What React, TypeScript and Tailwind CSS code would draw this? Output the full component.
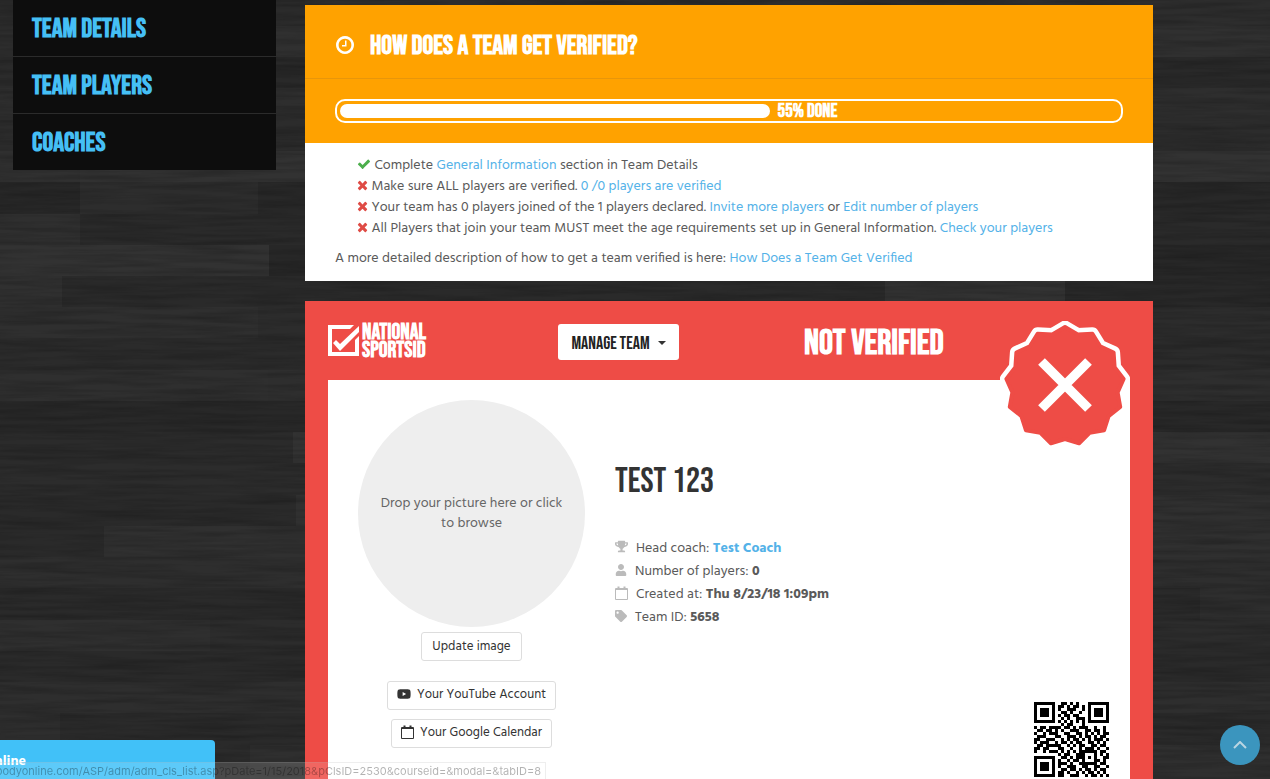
import React from "react";
import { FaTag, FaTrophy, FaUser, FaYoutube } from "react-icons/fa";

type IconProps = { className?: string };

const CheckIcon = ({ className }: IconProps) => (
  <svg viewBox="0 0 1792 1792" fill="currentColor" className={className}>
    <path d="M1671 566q0 40-28 68l-724 724-136 136q-28 28-68 28t-68-28l-136-136-362-362q-28-28-28-68t28-68l136-136q28-28 68-28t68 28l294 295 656-657q28-28 68-28t68 28l136 136q28 28 28 68z" />
  </svg>
);

const TimesIcon = ({ className }: IconProps) => (
  <svg viewBox="190 0 1408 1792" fill="currentColor" className={className}>
    <path d="M1490 1322q0 40-28 68l-136 136q-28 28-68 28t-68-28l-294-294-294 294q-28 28-68 28t-68-28l-136-136q-28-28-28-68t28-68l294-294-294-294q-28-28-28-68t28-68l136-136q28-28 68-28t68 28l294 294 294-294q28-28 68-28t68 28l136 136q28 28 28 68t-28 68l-294 294 294 294q28 28 28 68z" />
  </svg>
);

const ClockIcon = ({ className }: IconProps) => (
  <svg viewBox="128 128 1536 1536" fill="currentColor" className={className}>
    <path d="M1024 544v448q0 14-9 23t-23 9h-320q-14 0-23-9t-9-23v-64q0-14 9-23t23-9h224v-352q0-14 9-23t23-9h64q14 0 23 9t9 23zm416 352q0-148-73-273t-198-198-273-73-273 73-198 198-73 273 73 273 198 198 273 73 273-73 198-198 73-273zm224 0q0 209-103 385.5t-279.5 279.5-385.5 103-385.5-103-279.5-279.5-103-385.5 103-385.5 279.5-279.5 385.5-103 385.5 103 279.5 279.5 103 385.5z" />
  </svg>
);

const CalendarIcon = ({ className }: IconProps) => (
  <svg viewBox="0 0 13 14" fill="none" stroke="currentColor" className={className}>
    <path d="M.5 2.5h12v11H.5z" />
    <path d="M.5 3.5h12" />
    <path d="M3.5 .5v3M9.5 .5v3" strokeWidth="2" />
  </svg>
);

// [x, y, width, colour] of every board on the floor
const planks: [number, number, number, string][] = [
  [0, 0, 305, "#2b2b2b"], [305, 0, 965, "#2d2d2d"],
  [0, 26, 276, "#2d2d2d"], [276, 26, 994, "#303030"],
  [0, 57, 276, "#2b2b2b"], [276, 57, 994, "#292929"],
  [0, 88, 1270, "#2e2e2e"],
  [0, 120, 1270, "#2c2c2c"],
  [0, 151, 80, "#303030"], [80, 151, 1190, "#323232"],
  [0, 182, 80, "#272727"], [80, 182, 178, "#2d2d2d"], [258, 182, 1012, "#282828"],
  [0, 214, 80, "#2f2f2f"], [80, 214, 1190, "#2a2a2a"],
  [0, 245, 269, "#323232"], [269, 245, 1001, "#272727"],
  [0, 276, 62, "#303030"], [62, 276, 823, "#2a2a2a"], [885, 276, 180, "#323232"], [1065, 276, 205, "#282828"],
  [0, 307, 258, "#2f2f2f"], [258, 307, 1012, "#2c2c2c"],
  [0, 338, 1270, "#2b2b2b"],
  [0, 370, 268, "#2f2f2f"], [268, 370, 1002, "#2e2e2e"],
  [0, 401, 1270, "#282828"],
  [0, 432, 293, "#2b2b2b"], [293, 432, 977, "#323232"],
  [0, 463, 1270, "#2c2c2c"],
  [0, 495, 296, "#2a2a2a"], [296, 495, 974, "#303030"],
  [0, 526, 104, "#2a2a2a"], [104, 526, 1166, "#303030"],
  [0, 557, 1270, "#2e2e2e"],
  [0, 588, 1200, "#2a2a2a"], [1200, 588, 70, "#2e2e2e"],
  [0, 620, 210, "#2f2f2f"], [210, 620, 1060, "#2c2c2c"],
  [0, 651, 1270, "#2a2a2a"],
  [0, 682, 1270, "#2e2e2e"],
  [0, 713, 60, "#2e2e2e"], [60, 713, 1210, "#2a2a2a"],
  [0, 745, 250, "#2b2b2b"], [250, 745, 1020, "#2f2f2f"],
];

const WoodFloor = () => (
  <svg
    viewBox="0 0 1270 779"
    preserveAspectRatio="xMidYMin slice"
    className="fixed inset-0 -z-10 h-full w-full bg-[#292929]"
  >
    <filter id="grain" x="0" y="0" width="100%" height="100%">
      <feTurbulence type="fractalNoise" baseFrequency="0.012 0.2" numOctaves="3" seed="7" />
      <feColorMatrix values="0 0 0 0 0  0 0 0 0 0  0 0 0 0 0  1.2 0 0 0 -0.42" />
    </filter>
    {planks.map(([x, y, width, fill]) => (
      <rect key={`${x}-${y}`} x={x} y={y} width={width} height="34" fill={fill} />
    ))}
    <rect width="1270" height="779" filter="url(#grain)" opacity="0.3" />
  </svg>
);

const burst = Array.from({ length: 26 }, (_, i) => {
  const r = i % 2 ? 53 : 59;
  const a = (i * Math.PI) / 13;
  return `${(65 + r * Math.sin(a)).toFixed(1)},${(65 - r * Math.cos(a)).toFixed(1)}`;
}).join(" ");

const NotVerifiedBadge = ({ className }: IconProps) => (
  <svg viewBox="0 0 130 130" className={className}>
    <polygon points={burst} fill="#fff" stroke="#fff" strokeWidth="13" strokeLinejoin="round" />
    <polygon points={burst} fill="#ee4c46" stroke="#ee4c46" strokeWidth="4" strokeLinejoin="round" />
    <path d="M41.5 40.5l47 47M88.5 40.5l-47 47" stroke="#fff" strokeWidth="9.5" />
  </svg>
);

const Logo = () => (
  <a href="#" className="flex items-center gap-[3px] text-white">
    <svg viewBox="0 0 31 31" className="h-[31px] w-[31px]" fill="currentColor">
      <path d="M0 0h26l-4 4H4v23h23V15l4-4v20H0z" />
      <path d="M5 18l3-3 4 4L31 1v6L12 26z" />
    </svg>
    <span className="pt-[2px] font-['Bebas_Neue','Roboto_Condensed',sans-serif] text-[22px] leading-[18px] font-bold">
      NATIONAL
      <br />
      SPORTSID
    </span>
  </a>
);

const qrRows = [
  "1111111001101010001111111",
  "1000001011010110101000001",
  "1011101010011100101011101",
  "1011101001101001001011101",
  "1011101010110110001011101",
  "1000001001010011101000001",
  "1111111010101010101111111",
  "0000000001011000100000000",
  "1011011110110101110010010",
  "0110110101001110011011010",
  "1001011100110011010101011",
  "0111000110011101011010110",
  "1100111001010110101011101",
  "1011100101101011001101010",
  "0110111110010101100110110",
  "1101100011001001011101001",
  "1001011101010101111110110",
  "0000000010110011100010101",
  "1111111001101011101010011",
  "1000001010010110100011010",
  "1011101011101001111110110",
  "1011101010011100110011001",
  "1011101001101101011010110",
  "1000001011010010101101010",
  "1111111011001110010110101",
];

const QrCode = () => (
  <svg viewBox="0 0 25 25" shapeRendering="crispEdges" className="h-[75px] w-[75px]" role="img" aria-label="Team QR code">
    {qrRows.map((row, y) =>
      row.split("").map((cell, x) =>
        cell === "1" ? <rect key={`${x}-${y}`} x={x} y={y} width="1" height="1" /> : null
      )
    )}
  </svg>
);

const Link = ({ children }: { children: React.ReactNode }) => (
  <a href="#" className="text-[#54b2e8]">
    {children}
  </a>
);

const menu = ["Team Details", "Team Players", "Coaches"];

const Sidebar = () => (
  <nav className="w-[263px] shrink-0 self-start bg-[#0d0d0d]">
    {menu.map((item) => (
      <a
        key={item}
        href="#"
        className="block border-b border-[#2b2b2b] px-[19px] pt-[2px] font-['Bebas_Neue','Roboto_Condensed',sans-serif] text-[27px] leading-[54px] font-bold text-[#45bff5] uppercase last:border-b-0"
      >
        {item}
      </a>
    ))}
  </nav>
);

const VerifySteps = () => (
  <section className="bg-white">
    <div className="bg-[#ffa200] text-white">
      <h2 className="flex h-[74px] items-center gap-4 border-b border-[#e8960a] px-[31px] pt-[6px] font-['Bebas_Neue','Roboto_Condensed',sans-serif] text-[27px] leading-8 font-bold">
        <ClockIcon className="h-[18px] w-[18px]" />
        <span className="pt-[2px]">HOW DOES A TEAM GET VERIFIED?</span>
      </h2>
      <div className="px-[30px] py-5">
        <div
          role="progressbar"
          aria-label="Verification"
          aria-valuenow={55}
          className="flex h-6 items-center rounded-[10px] border-2 border-white pl-[3px]"
        >
          <div className="h-[14px] rounded-full bg-white" style={{ width: "55%" }} />
          <span className="pt-[2px] pl-2 font-['Bebas_Neue','Roboto_Condensed',sans-serif] text-[19px] leading-5 font-bold">
            55% DONE
          </span>
        </div>
      </div>
    </div>
    <div className="px-[30px] py-3 leading-[21px]">
      <ul className="mb-[9px] pl-[22px]">
        <li>
          <CheckIcon className="inline h-[14px] w-[14px] align-[-2px] text-[#4cae4c]" /> Complete{" "}
          <Link>General Information</Link> section in Team Details
        </li>
        <li>
          <TimesIcon className="inline h-[14px] w-[11px] align-[-2px] text-[#df4b45]" /> Make sure ALL players are
          verified. <Link>0 /0 players are verified</Link>
        </li>
        <li>
          <TimesIcon className="inline h-[14px] w-[11px] align-[-2px] text-[#df4b45]" /> Your team has 0 players joined
          of the 1 players declared. <Link>Invite more players</Link> or <Link>Edit number of players</Link>
        </li>
        <li>
          <TimesIcon className="inline h-[14px] w-[11px] align-[-2px] text-[#df4b45]" /> All Players that join your
          team MUST meet the age requirements set up in General Information. <Link>Check your players</Link>
        </li>
      </ul>
      <p>
        A more detailed description of how to get a team verified is here: <Link>How Does a Team Get Verified</Link>
      </p>
    </div>
  </section>
);

const TeamCard = () => (
  <section className="relative bg-[#ee4c46] px-[23px]">
    <header className="grid h-[79px] grid-cols-[230px_246px_1fr] items-center">
      <Logo />
      <button
        type="button"
        className="mt-[2px] flex h-9 w-[121px] items-center justify-center gap-2 rounded-[3px] bg-white pt-[2px] font-['Bebas_Neue','Roboto_Condensed',sans-serif] text-lg whitespace-nowrap text-[#222]"
      >
        <span className="pt-[2px]">MANAGE TEAM</span>
        <span className="border-x-4 border-t-4 border-x-transparent border-t-[#333]" />
      </button>
      <strong className="pt-[6px] font-['Bebas_Neue','Roboto_Condensed',sans-serif] text-[35px] leading-8 font-bold text-white">
        NOT VERIFIED
      </strong>
    </header>
    <NotVerifiedBadge className="absolute top-5 right-[23px] h-[130px] w-[130px]" />
    <div className="flex bg-white pr-[21px] pb-[2px] pl-[30px]">
      <div className="flex w-[227px] shrink-0 flex-col items-center pt-5 text-[13px] text-[#333]">
        <div className="flex h-[227px] w-[227px] items-center rounded-full bg-[#eee] px-5 text-center text-sm leading-5 text-[#666]">
          Drop your picture here or click to browse
        </div>
        <button type="button" className="mt-[5px] h-[29px] rounded-[3px] border border-[#ddd] px-[10px] pt-[2px]">
          Update image
        </button>
        <button type="button" className="mt-5 flex h-[29px] items-center gap-[6px] rounded-[3px] border border-[#ddd] px-[9px]">
          <FaYoutube size={14} className="mb-1" />
          Your YouTube Account
        </button>
        <button type="button" className="mt-[9px] flex h-[29px] items-center gap-[6px] rounded-[3px] border border-[#ddd] px-[9px]">
          <CalendarIcon className="mb-1 h-[14px] w-[13px]" />
          Your Google Calendar
        </button>
      </div>
      <div className="ml-[30px] flex-1 pt-[82px]">
        <h1 className="font-['Bebas_Neue','Roboto_Condensed',sans-serif] text-[35px] leading-10 font-normal text-[#333]">
          TEST 123
        </h1>
        <ul className="mt-[35px] leading-[23px]">
          <li className="flex items-center gap-2">
            <FaTrophy size={13} className="mb-1 text-[#bbb]" />
            <span>
              Head coach: <b><Link>Test Coach</Link></b>
            </span>
          </li>
          <li className="flex items-center gap-2">
            <FaUser size={12} className="mb-1 text-[#bbb]" />
            <span>
              Number of players: <b>0</b>
            </span>
          </li>
          <li className="flex items-center gap-2">
            <CalendarIcon className="mb-1 h-[14px] w-[13px] text-[#bbb]" />
            <span>
              Created at: <b>Thu 8/23/18 1:09pm</b>
            </span>
          </li>
          <li className="flex items-center gap-2">
            <FaTag size={12} className="mb-1 text-[#bbb]" />
            <span>
              Team ID: <b>5658</b>
            </span>
          </li>
        </ul>
      </div>
      <div className="mt-[322px] self-end">
        <QrCode />
      </div>
    </div>
  </section>
);

const App = () => {
  return (
    <div className="relative isolate min-h-screen font-['Hind','Lato',sans-serif] text-sm text-[#5a5a5a]">
      <WoodFloor />
      <div className="flex gap-[29px] pr-[117px] pl-[13px]">
        <Sidebar />
        <main className="flex flex-1 flex-col gap-5 pt-[5px]">
          <VerifySteps />
          <TeamCard />
        </main>
      </div>
      <div className="fixed bottom-0 left-0 h-[39px] w-[215px] rounded-tr bg-[#41c1f8] text-white">
        <div className="flex w-[26px] justify-end overflow-hidden pt-3 font-bold">Online</div>
      </div>
      <div className="fixed bottom-0 left-0 flex h-[17px] w-[546px] justify-end overflow-hidden border-t border-r border-[#aaa]/20 bg-white/15 pr-1 font-['Inter',sans-serif] text-[11px] leading-4 whitespace-nowrap text-black/30">
        bodyonline.com/ASP/adm/adm_cls_list.asp?pDate=1/15/2018&amp;pClsID=2530&amp;courseid=&amp;modal=&amp;tabID=8
      </div>
      <button
        type="button"
        aria-label="Back to top"
        className="fixed right-[10px] bottom-[14px] grid h-10 w-10 place-items-center rounded-full bg-[#3b95be]"
      >
        <svg viewBox="0 0 14 8" fill="none" stroke="#b9d5e2" strokeWidth="2" className="h-2 w-[14px]">
          <path d="M1 7l6-6 6 6" />
        </svg>
      </button>
    </div>
  );
};

export default App;
